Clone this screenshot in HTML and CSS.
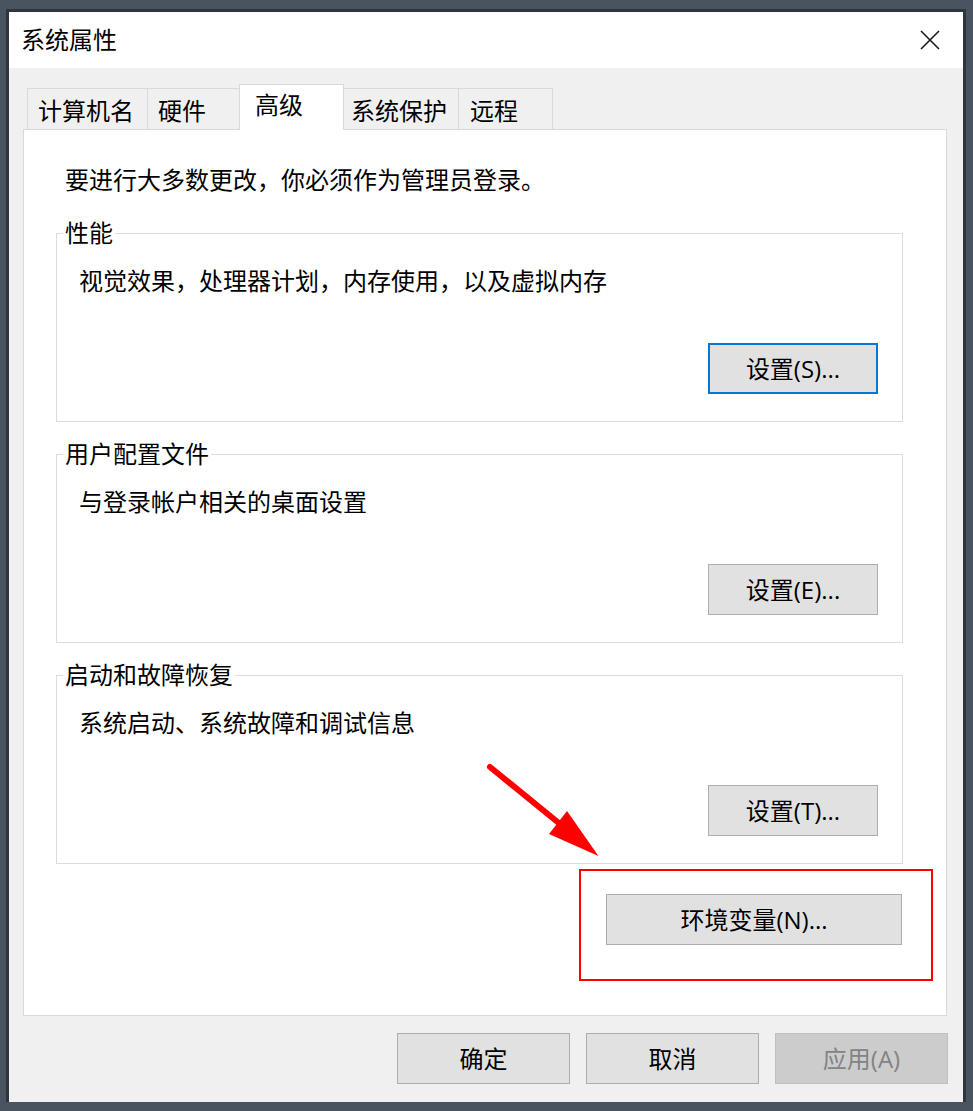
FILE: index.html
```html
<!DOCTYPE html>
<html>
  <head>
    <meta charset="utf-8">
    <title>系统属性</title>
    <link rel="stylesheet" href="styles.css">
  </head>
  <body>
    <div class="dialog">
      <div class="titlebar">
        <span class="title">系统属性</span>
        <svg class="close" width="20" height="20" viewBox="0 0 20 20">
          <path d="M1 1 L19 19 M19 1 L1 19" stroke="#1a1a1a" stroke-width="1.6" fill="none" />
        </svg>
      </div>
      <div class="content">
        <div class="tabs">
          <div class="tab tab-name">计算机名</div>
          <div class="tab tab-hw">硬件</div>
          <div class="tab tab-active">高级</div>
          <div class="tab tab-protect">系统保护</div>
          <div class="tab tab-remote">远程</div>
        </div>
        <div class="panel">
          <p class="intro">要进行大多数更改，你必须作为管理员登录。</p>

          <fieldset class="group group-first">
            <legend>性能</legend>
            <p class="group-text">视觉效果，处理器计划，内存使用，以及虚拟内存</p>
            <div class="group-actions">
              <button class="btn btn-focus">设置(S)...</button>
            </div>
          </fieldset>

          <fieldset class="group">
            <legend>用户配置文件</legend>
            <p class="group-text">与登录帐户相关的桌面设置</p>
            <div class="group-actions">
              <button class="btn">设置(E)...</button>
            </div>
          </fieldset>

          <fieldset class="group">
            <legend>启动和故障恢复</legend>
            <p class="group-text">系统启动、系统故障和调试信息</p>
            <div class="group-actions">
              <button class="btn">设置(T)...</button>
            </div>
          </fieldset>

          <div class="env-row">
            <button class="btn btn-env">环境变量(N)...</button>
          </div>

          <!-- annotation overlay -->
          <div class="highlight"></div>
          <svg class="arrow" width="130" height="110" viewBox="0 0 130 110">
            <line x1="10" y1="12" x2="80" y2="69" stroke="#ff0000" stroke-width="6" stroke-linecap="round" />
            <polygon points="118.5,101 69,79 87,56" fill="#ff0000" />
          </svg>
        </div>
        <div class="footer">
          <button class="btn btn-footer">确定</button>
          <button class="btn btn-footer">取消</button>
          <button class="btn btn-footer btn-disabled">应用(A)</button>
        </div>
      </div>
    </div>
  </body>
</html>
```

FILE: styles.css
```css
* {
  box-sizing: border-box;
}
body {
  margin: 0;
  background: #4a5461;
  font-family: "Open Sans", "Noto Sans CJK SC", sans-serif;
  font-size: 24px;
  color: #000;
}
.dialog {
  width: 954px;
  height: 1090px;
  margin: 12px 0 0 9px;
  background: #f0f0f0;
  box-shadow: 0 0 0 3px #2f353d;
  display: flex;
  flex-direction: column;
}
.titlebar {
  height: 56px;
  background: #fff;
  display: flex;
  align-items: center;
  justify-content: space-between;
  padding: 0 23px 0 12px;
}
.title {
  line-height: 30px;
}
.close {
  display: block;
}
.content {
  flex: 1;
  padding: 16px 16px 0 14px;
}

/* tabs */
.tabs {
  display: flex;
  align-items: flex-end;
  height: 46px;
  padding-left: 4px;
  margin-bottom: -1px;
}
.tab {
  height: 42px;
  border: 1px solid #d9d9d9;
  border-bottom: none;
  background: #f0f0f0;
  line-height: 30px;
  padding-top: 7px;
  padding-left: 10px;
  margin-left: -1px;
  white-space: nowrap;
}
.tab-name {
  width: 121px;
  margin-left: 0;
}
.tab-hw {
  width: 93px;
}
.tab-active {
  width: 105px;
  height: 46px;
  background: #fff;
  padding-top: 5px;
  padding-left: 15px;
  position: relative;
  z-index: 1;
}
.tab-protect {
  width: 116px;
  padding-left: 7px;
}
.tab-remote {
  width: 95px;
  padding-left: 11px;
}

/* panel */
.panel {
  position: relative;
  height: 887px;
  background: #fff;
  border: 1px solid #d9d9d9;
  padding-top: 35px;
}
.intro {
  margin: 0 0 0 41px;
  line-height: 30px;
}
.group {
  margin: 17px 43px 0 32px;
  padding: 0 0 27px 0;
  border: 1px solid #dcdcdc;
  min-width: 0;
}
.group-first {
  margin-top: 23px;
}
.group legend {
  margin-left: 6px;
  padding: 0 2px;
  line-height: 30px;
}
.group-text {
  margin: 18px 0 0 22px;
  line-height: 30px;
}
.group-actions {
  display: flex;
  justify-content: flex-end;
  margin-top: 47px;
  padding-right: 24px;
}
.env-row {
  display: flex;
  justify-content: flex-end;
  margin-top: 30px;
  padding-right: 44px;
}

/* buttons */
.btn {
  width: 170px;
  height: 51px;
  background: #e1e1e1;
  border: 1px solid #adadad;
  font-family: inherit;
  font-size: 24px;
  color: #000;
  padding: 0;
  line-height: 30px;
}
.btn-focus {
  border: 2px solid #0078d7;
}
.btn-env {
  width: 296px;
}
.footer {
  display: flex;
  justify-content: flex-end;
  gap: 16px;
  margin: 17px -1px 0 0;
}
.btn-footer {
  width: 173px;
}
.btn-disabled {
  background: #cccccc;
  border-color: #bfbfbf;
  color: #838383;
}

/* annotation */
.highlight {
  position: absolute;
  left: 555px;
  top: 739px;
  width: 354px;
  height: 112px;
  border: 2px solid #ff0000;
}
.arrow {
  position: absolute;
  left: 456px;
  top: 625px;
}
```
